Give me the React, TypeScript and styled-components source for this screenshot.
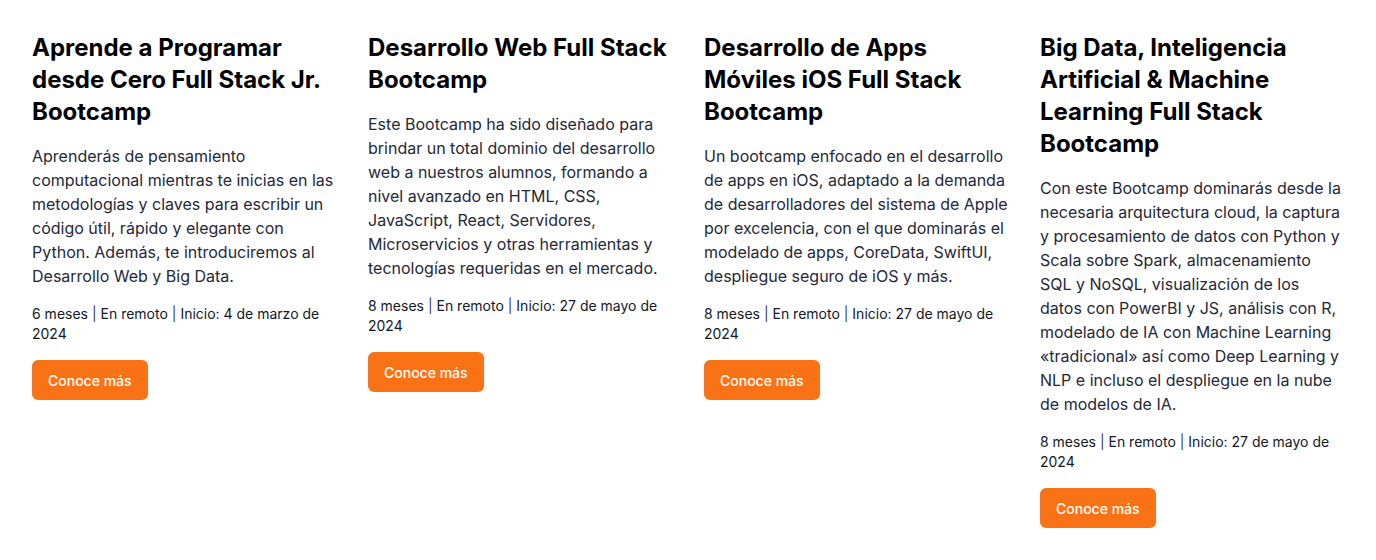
import React from "react";
import styled, { createGlobalStyle } from "styled-components";

const GlobalStyle = createGlobalStyle`
  html, body { margin: 0; padding: 0; background: #ffffff; }
  body { font-family: Inter, "Noto Sans", sans-serif; -webkit-font-smoothing: antialiased; }
  * { box-sizing: border-box; }
`;

const Grid = styled.section`
  display: grid;
  grid-template-columns: repeat(4, 1fr);
  column-gap: 32px;
  padding: 32px;
  align-items: start;
`;

const Card = styled.article`
  display: flex;
  flex-direction: column;
  align-items: flex-start;
  gap: 16px;
`;

const Title = styled.h2`
  margin: 0;
  font-size: 24px;
  line-height: 32px;
  font-weight: 700;
  color: #000000;
`;

const Description = styled.p`
  margin: 0;
  font-size: 16px;
  line-height: 24px;
  font-weight: 400;
  color: #1f2937;
`;

const Meta = styled.p`
  margin: 0;
  font-size: 14px;
  line-height: 20px;
  color: #111827;
`;

const Sep = styled.span`
  color: #374151;
`;

const Button = styled.a`
  display: inline-flex;
  align-items: center;
  justify-content: center;
  height: 40px;
  padding: 0 16px;
  border-radius: 6px;
  background: #f97316;
  color: #ffffff;
  font-size: 14px;
  font-weight: 500;
  text-decoration: none;
  cursor: pointer;
`;

type Course = {
  title: string;
  description: string;
  duration: string;
  mode: string;
  start: string;
};

const courses: Course[] = [
  {
    title: "Aprende a Programar desde Cero Full Stack Jr. Bootcamp",
    description:
      "Aprenderás de pensamiento computacional mientras te inicias en las metodologías y claves para escribir un código útil, rápido y elegante con Python. Además, te introduciremos al Desarrollo Web y Big Data.",
    duration: "6 meses",
    mode: "En remoto",
    start: "Inicio: 4 de marzo de 2024",
  },
  {
    title: "Desarrollo Web Full Stack Bootcamp",
    description:
      "Este Bootcamp ha sido diseñado para brindar un total dominio del desarrollo web a nuestros alumnos, formando a nivel avanzado en HTML, CSS, JavaScript, React, Servidores, Microservicios y otras herramientas y tecnologías requeridas en el mercado.",
    duration: "8 meses",
    mode: "En remoto",
    start: "Inicio: 27 de mayo de 2024",
  },
  {
    title: "Desarrollo de Apps Móviles iOS Full Stack Bootcamp",
    description:
      "Un bootcamp enfocado en el desarrollo de apps en iOS, adaptado a la demanda de desarrolladores del sistema de Apple por excelencia, con el que dominarás el modelado de apps, CoreData, SwiftUI, despliegue seguro de iOS y más.",
    duration: "8 meses",
    mode: "En remoto",
    start: "Inicio: 27 de mayo de 2024",
  },
  {
    title: "Big Data, Inteligencia Artificial & Machine Learning Full Stack Bootcamp",
    description:
      "Con este Bootcamp dominarás desde la necesaria arquitectura cloud, la captura y procesamiento de datos con Python y Scala sobre Spark, almacenamiento SQL y NoSQL, visualización de los datos con PowerBI y JS, análisis con R, modelado de IA con Machine Learning «tradicional» así como Deep Learning y NLP e incluso el despliegue en la nube de modelos de IA.",
    duration: "8 meses",
    mode: "En remoto",
    start: "Inicio: 27 de mayo de 2024",
  },
];

export default function App() {
  return (
    <>
      <GlobalStyle />
      <Grid>
        {courses.map((c) => (
          <Card key={c.title}>
            <Title>{c.title}</Title>
            <Description>{c.description}</Description>
            <Meta>
              {c.duration} <Sep>|</Sep> {c.mode} <Sep>|</Sep> {c.start}
            </Meta>
            <Button>Conoce más</Button>
          </Card>
        ))}
      </Grid>
    </>
  );
}
